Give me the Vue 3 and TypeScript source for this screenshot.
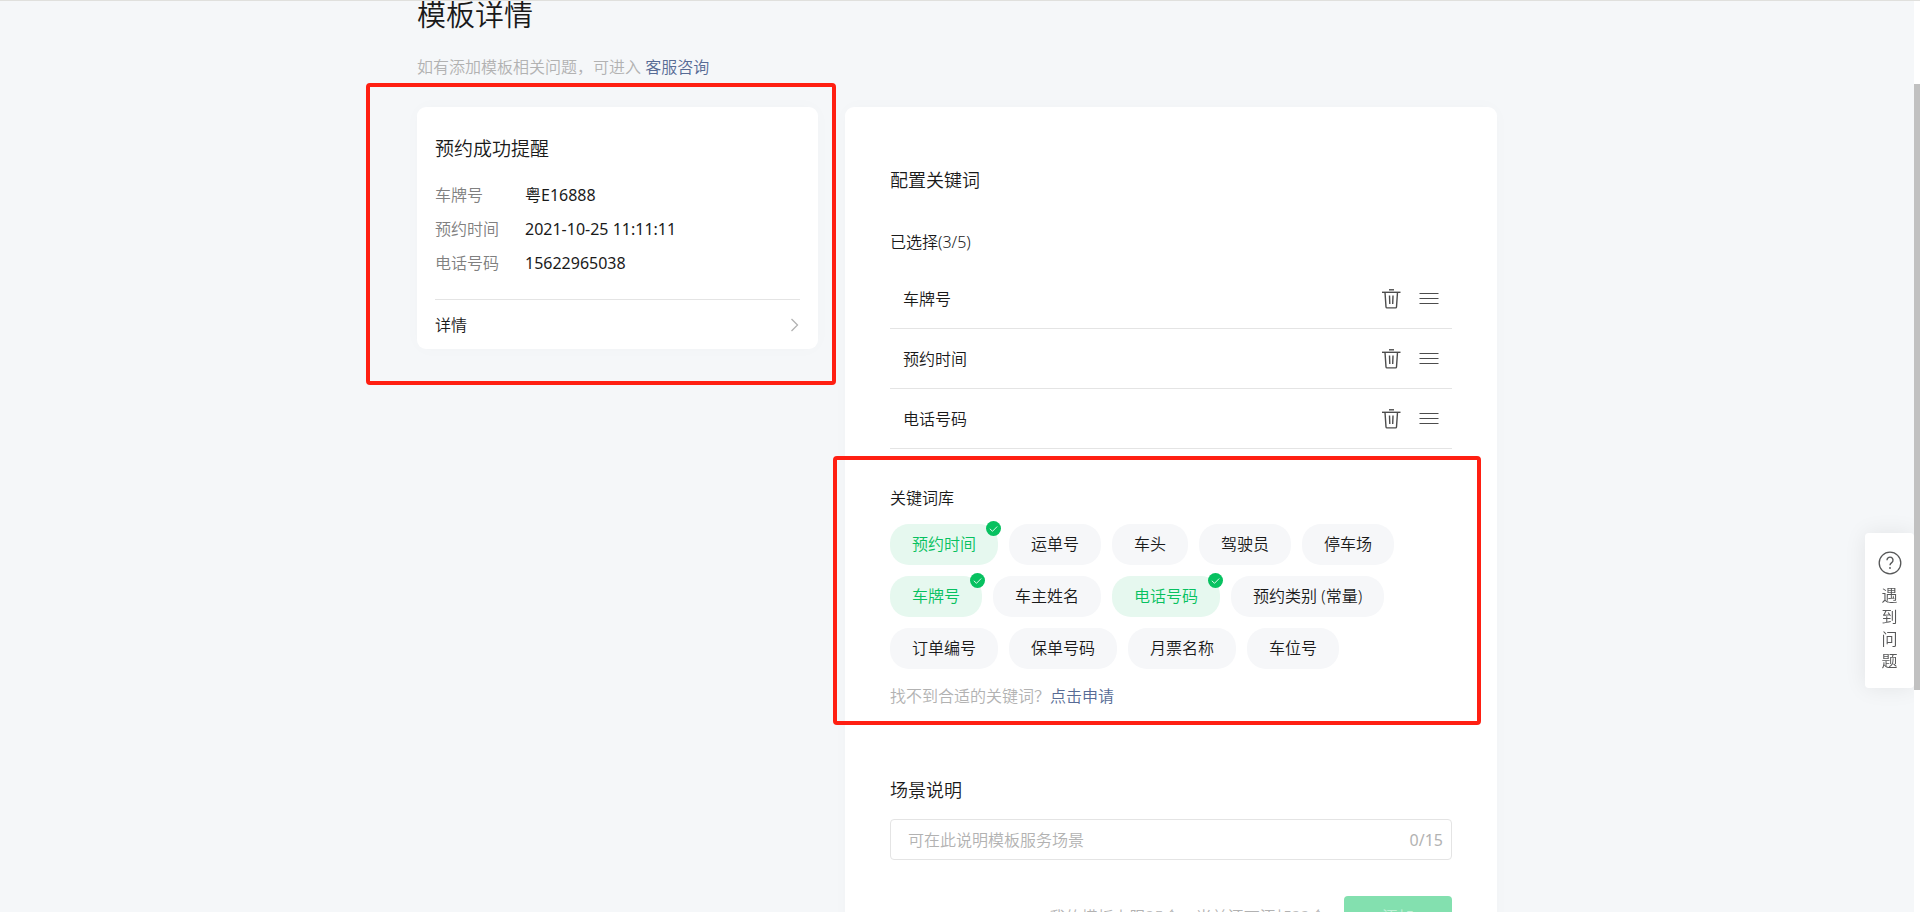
<script setup lang="ts">
import { computed, ref } from 'vue'

interface Field {
  name: string
  sample: string
}

const selected = ref<Field[]>([
  { name: '车牌号', sample: '粤E16888' },
  { name: '预约时间', sample: '2021-10-25 11:11:11' },
  { name: '电话号码', sample: '15622965038' },
])

const keywords: string[] = [
  '预约时间', '运单号', '车头', '驾驶员', '停车场',
  '车牌号', '车主姓名', '电话号码', '预约类别 (常量)',
  '订单编号', '保单号码', '月票名称', '车位号',
]

const maxFields = 5
const scene = ref('')
const selectedNames = computed(() => selected.value.map((f) => f.name))

function remove(name: string) {
  selected.value = selected.value.filter((f) => f.name !== name)
}

function toggle(name: string) {
  if (selectedNames.value.includes(name)) remove(name)
  else if (selected.value.length < maxFields) selected.value.push({ name, sample: '' })
}
</script>

<template>
  <div class="page">
    <main class="container">
      <h1>模板详情</h1>
      <p class="intro">如有添加模板相关问题，可进入 <a href="#">客服咨询</a></p>

      <div class="columns">
        <section class="preview">
          <div class="card preview-card">
            <h2>预约成功提醒</h2>
            <dl>
              <div v-for="f in selected" :key="f.name" class="pair">
                <dt>{{ f.name }}</dt>
                <dd>{{ f.sample }}</dd>
              </div>
            </dl>
            <a href="#" class="detail">
              <span>详情</span>
              <svg width="10" height="14" viewBox="0 0 10 14" fill="none" stroke="#b2b2b2" stroke-width="1.3">
                <path d="M1.500 1 7.500 7 1.500 13" />
              </svg>
            </a>
          </div>
          <div class="marker marker-preview"></div>
        </section>

        <section class="card editor">
          <h3>配置关键词</h3>
          <p class="label">已选择({{ selected.length }}/{{ maxFields }})</p>
          <ul class="picked">
            <li v-for="f in selected" :key="f.name">
              <span class="picked-name">{{ f.name }}</span>
              <button type="button" class="icon" :aria-label="'删除' + f.name" @click="remove(f.name)">
                <svg width="20" height="20" viewBox="0 0 20 20" fill="none" stroke="#4c4c4c" stroke-width="1.4">
                  <path d="M8 .8h5" />
                  <path d="M1 3.300h18.500" />
                  <path d="M4 3.300 5 18q.1.900 1 .900h8.500q.9 0 1-.9l1-14.700" />
                  <path d="M8.500 6.500l.3 8.500M12 6.500l-.3 8.500" />
                </svg>
              </button>
              <button type="button" class="icon" :aria-label="'拖动' + f.name">
                <svg width="20" height="20" viewBox="0 0 20 20" fill="none" stroke="#4c4c4c" stroke-width="1.2">
                  <path d="M.5 4.500h19M.5 9.500h19M.5 14.500h19" />
                </svg>
              </button>
            </li>
          </ul>

          <div class="library">
            <p class="label">关键词库</p>
            <div class="chips">
              <button
                v-for="k in keywords"
                :key="k"
                type="button"
                class="chip"
                :class="{ on: selectedNames.includes(k) }"
                :aria-pressed="selectedNames.includes(k)"
                @click="toggle(k)"
              >
                {{ k }}
                <svg v-if="selectedNames.includes(k)" class="badge" width="15" height="15" viewBox="0 0 15 15">
                  <circle cx="7.500" cy="7.500" r="7.500" fill="#07c160" />
                  <path d="M3.800 7.800 6.500 10.300 11.200 5.500" fill="none" stroke="#fff" stroke-opacity=".85" stroke-width="1" />
                </svg>
              </button>
            </div>
            <p class="hint">找不到合适的关键词？<a href="#">点击申请</a></p>
            <div class="marker marker-library"></div>
          </div>

          <label for="scene" class="scene-label">场景说明</label>
          <div class="field">
            <input id="scene" v-model="scene" type="text" maxlength="15" placeholder="可在此说明模板服务场景" />
            <span class="count">{{ scene.length }}/15</span>
          </div>

          <div class="actions">
            <span>我的模板上限25个，当前还可添加22个</span>
            <button type="button" class="submit">添加</button>
          </div>
        </section>
      </div>
    </main>

    <button type="button" class="help">
      <svg width="24" height="24" viewBox="0 0 24 24" fill="none" stroke="#565758">
        <circle cx="12" cy="12" r="10.800" stroke-width="1.3" />
        <path d="M9 9.300a3 3 0 1 1 4.700 2.300c-1.100.8-1.700 1.300-1.700 2.700" stroke-width="1.4" />
        <circle cx="12" cy="17" r=".9" fill="#565758" stroke="none" />
      </svg>
      <span>遇到问题</span>
    </button>
    <div class="track"><div class="thumb"></div></div>
  </div>
</template>

<style>
body {
  margin: 0;
}
</style>

<style scoped>
.page {
  position: relative;
  box-sizing: border-box;
  height: 100vh;
  overflow: hidden;
  padding-right: 6px;
  border-top: 1px solid #e0e0dd;
  background: #f5f7f9;
  color: #1a1a1a;
  font: 350 16px/24px "Noto Sans", "Noto Sans CJK SC", sans-serif;
}

h1, h2, h3, p, dl, dd, ul {
  margin: 0;
  padding: 0;
}

h1, h2, h3 {
  font-weight: 350;
}

a {
  color: #576b95;
  text-decoration: none;
}

button {
  padding: 0;
  border: 0;
  background: none;
  color: inherit;
  font: inherit;
  cursor: pointer;
}

svg {
  display: block;
}

.container {
  max-width: 1080px;
  margin: 0 auto;
}

h1 {
  margin-top: -8px;
  font-size: 29px;
  line-height: 44px;
}

.intro {
  margin: 18px 0 28px;
  color: #b2b2b2;
}

.columns {
  display: grid;
  grid-template-columns: 401px minmax(0, 1fr);
  align-items: start;
  gap: 27px;
}

.card {
  border-radius: 9px;
  background: #fff;
  box-shadow: 0 0 18px rgba(0, 0, 0, 0.02);
}

.preview,
.library {
  position: relative;
}

.marker {
  position: absolute;
  border: 4px solid #ff1f12;
  border-radius: 4px;
  pointer-events: none;
}

.marker-preview {
  inset: -24px -18px -36px -51px;
}

.marker-library {
  inset: -30px -29px -17px -57px;
}

.preview-card {
  padding: 28px 18px 0;
}

h2 {
  margin-bottom: 18px;
  font-size: 19px;
  line-height: 28px;
}

.pair {
  display: flex;
  line-height: 28px;
  margin-bottom: 6px;
}

dt {
  width: 90px;
  color: #808080;
}

dd,
.count {
  font-weight: 400;
}

.detail {
  display: flex;
  align-items: center;
  justify-content: space-between;
  height: 49px;
  margin-top: 22px;
  border-top: 1px solid #e4e4e4;
  color: #1a1a1a;
}

.editor {
  min-height: 900px;
  padding: 60px 45px;
}

h3,
.scene-label {
  display: block;
  font-size: 18px;
  line-height: 26px;
}

h3 {
  margin-bottom: 37px;
}

.picked {
  margin: 15px 0 37px;
  list-style: none;
}

.picked li {
  display: flex;
  align-items: center;
  gap: 18px;
  box-sizing: border-box;
  height: 60px;
  padding: 0 13px;
  border-bottom: 1px solid #e4e4e4;
}

.picked-name {
  flex: 1;
}

.chips {
  display: flex;
  flex-wrap: wrap;
  gap: 11px;
  max-width: 520px;
  margin: 14px 0 15px;
}

.chip {
  position: relative;
  height: 41px;
  padding: 0 22px 2px;
  border-radius: 19px;
  background: #f6f7f9;
}

.chip.on {
  background: #e6f8ef;
  color: #07c160;
}

.badge {
  position: absolute;
  top: -3px;
  right: -3px;
}

.hint {
  color: #b2b2b2;
}

.scene-label {
  margin-top: 69px;
}

.field {
  display: flex;
  align-items: center;
  box-sizing: border-box;
  height: 41px;
  margin-top: 16px;
  padding: 0 8px 0 17px;
  border: 1px solid #e4e4e4;
  border-radius: 4px;
  color: #b2b2b2;
}

.field input {
  flex: 1;
  min-width: 0;
  padding: 0;
  border: 0;
  outline: 0;
  background: none;
  color: #1a1a1a;
  font: inherit;
}

.field input::placeholder {
  color: #b2b2b2;
  opacity: 1;
}

.actions {
  display: flex;
  align-items: center;
  justify-content: flex-end;
  gap: 18px;
  margin-top: 36px;
  color: #b2b2b2;
}

.submit {
  width: 108px;
  height: 41px;
  border-radius: 4px;
  background: #83e0af;
  color: #c1f0d7;
}

.help {
  position: fixed;
  top: 533px;
  right: 6px;
  display: flex;
  flex-direction: column;
  align-items: center;
  gap: 9px;
  box-sizing: border-box;
  width: 49px;
  padding: 18px 0 16px;
  border-radius: 4px;
  background: #fff;
  box-shadow: 0 0 22px rgba(0, 0, 0, 0.08);
  color: #565758;
  line-height: 22px;
}

.help span {
  width: 16px;
}

.track {
  position: fixed;
  top: 1px;
  right: 0;
  bottom: 0;
  width: 6px;
  background: #fff;
}

.thumb {
  height: 606px;
  margin-top: 83px;
  background: #c1c1c1;
}
</style>
